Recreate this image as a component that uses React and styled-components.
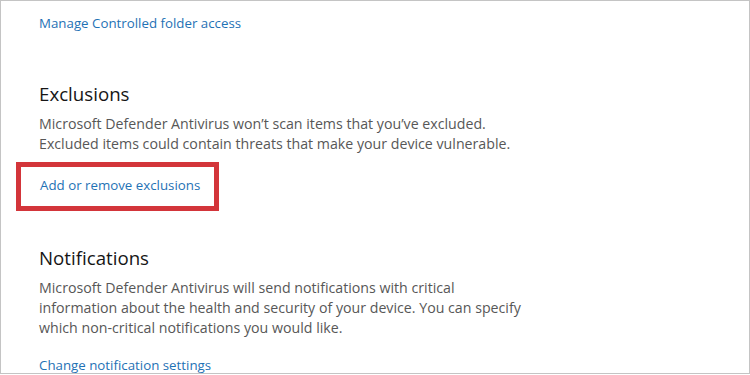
import React from "react";
import styled, { createGlobalStyle } from "styled-components";

const GlobalStyle = createGlobalStyle`
  html, body {
    margin: 0;
    padding: 0;
    background: #fff;
  }
  body {
    font-family: "Open Sans", "Noto Sans", sans-serif;
  }
`;

const Frame = styled.div`
  box-sizing: border-box;
  width: 750px;
  height: 374px;
  border: 1px solid #c4c4c4;
  overflow: hidden;
  padding: 12px 0 0 38px;
  background: #fff;
`;

const Link = styled.a`
  display: block;
  color: #1f72b5;
  font-size: 13.3px;
  line-height: 20px;
  text-decoration: none;
  cursor: pointer;
`;

const Section = styled.section`
  margin-top: ${(p) => p.$top}px;
`;

const Heading = styled.h2`
  margin: 0;
  font-weight: 400;
  font-size: 18.7px;
  line-height: 26px;
  color: #161616;
`;

const Body = styled.p`
  margin: 7px 0 0;
  font-size: 14.2px;
  line-height: 20px;
  color: #575757;
  white-space: nowrap;
`;

const Highlight = styled.div`
  box-sizing: border-box;
  width: 203px;
  height: 49px;
  margin: 8px 0 0 -23px;
  border: 5px solid #d3353a;
  padding: 8px 0 0 19px;
`;

const BottomLink = styled.div`
  margin-top: 17px;
`;

export default function App() {
  return (
    <>
      <GlobalStyle />
      <Frame>
        <Link>Manage Controlled folder access</Link>
        <Section $top={48}>
          <Heading>Exclusions</Heading>
          <Body>
            Microsoft Defender Antivirus won’t scan items that you’ve excluded.
            <br />
            Excluded items could contain threats that make your device
            vulnerable.
          </Body>
          <Highlight>
            <Link>Add or remove exclusions</Link>
          </Highlight>
        </Section>
        <Section $top={34}>
          <Heading>Notifications</Heading>
          <Body>
            Microsoft Defender Antivirus will send notifications with critical
            <br />
            information about the health and security of your device. You can
            specify
            <br />
            which non-critical notifications you would like.
          </Body>
          <BottomLink>
            <Link>Change notification settings</Link>
          </BottomLink>
        </Section>
      </Frame>
    </>
  );
}
